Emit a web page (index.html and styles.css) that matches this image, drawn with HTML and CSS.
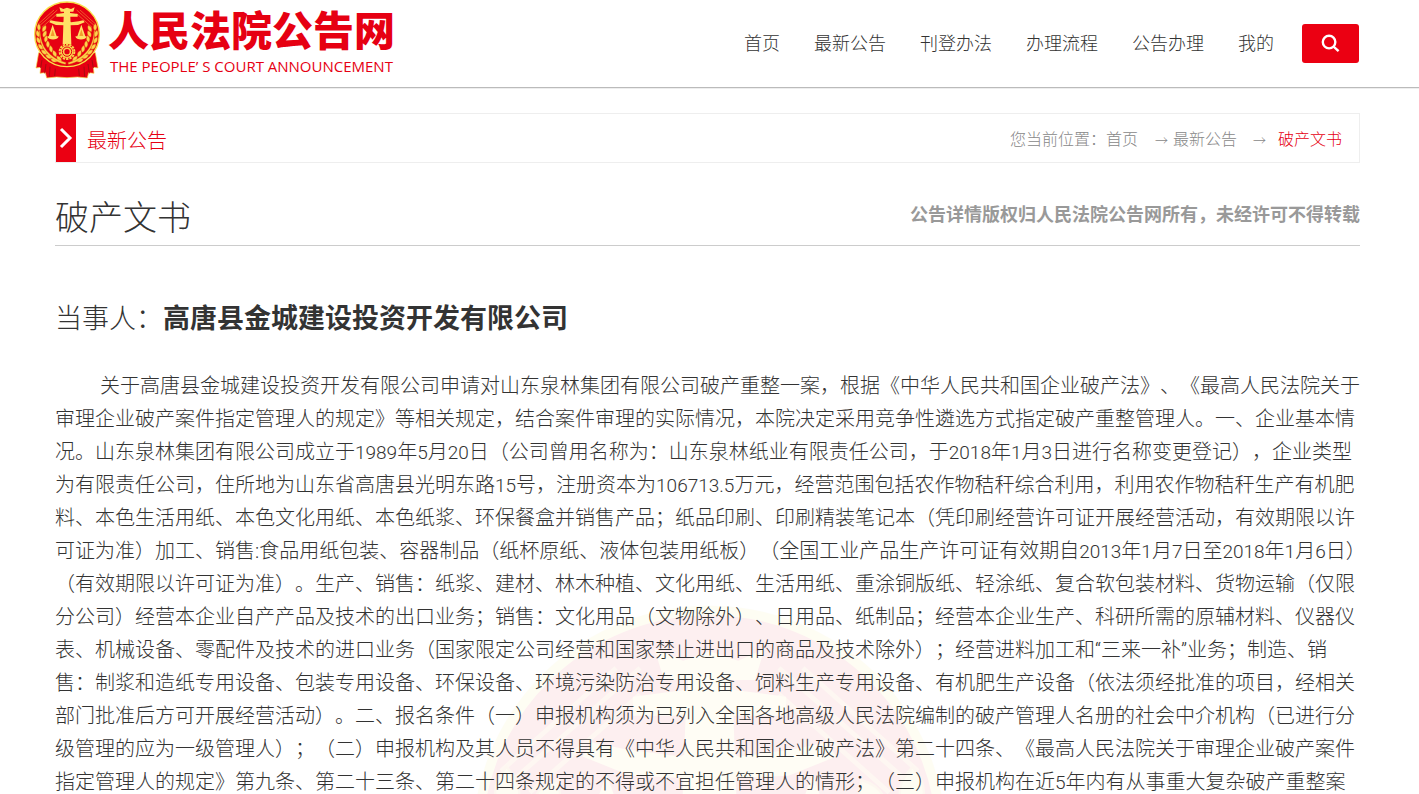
FILE: index.html
```html
<!DOCTYPE html>
<html lang="zh-CN">
<head>
<meta charset="utf-8">
<title>人民法院公告网</title>
<link rel="stylesheet" href="styles.css">
</head>
<body>
<svg class="defs" aria-hidden="true">
  <defs>
    <g id="leaf"><path d="M0 0C-8-4-10-12-5-20C3-15 5-7 0 0Z"/></g>
    <g id="branch">
      <use href="#leaf" transform="translate(57 92) rotate(12)"/>
      <use href="#leaf" transform="translate(68 95) rotate(42)"/>
      <use href="#leaf" transform="translate(56 111) rotate(0)"/>
      <use href="#leaf" transform="translate(70 111) rotate(38)"/>
      <use href="#leaf" transform="translate(60 130) rotate(-12)"/>
      <use href="#leaf" transform="translate(76 127) rotate(24)"/>
      <use href="#leaf" transform="translate(68 148) rotate(-24)"/>
      <use href="#leaf" transform="translate(84 143) rotate(12)"/>
      <use href="#leaf" transform="translate(80 163) rotate(-36)"/>
      <use href="#leaf" transform="translate(95 157) rotate(2)"/>
      <use href="#leaf" transform="translate(95 175) rotate(-48)"/>
      <use href="#leaf" transform="translate(108 170) rotate(-10)"/>
      <use href="#leaf" transform="translate(112 184) rotate(-58)"/>
      <use href="#leaf" transform="translate(124 183) rotate(-28)"/>
      <path d="M60 92C61 140 88 174 138 188L136 193C86 180 57 144 58 92Z"/>
    </g>
    <symbol id="emblem" viewBox="36 0 210 240">
      <path d="M56 158L48 204L62 202L60 220L76 218L80 234L110 231L141 233L172 231L202 234L206 218L222 220L220 202L234 204L226 158Z" fill="#e60012" stroke="#f7d94c" stroke-width="2"/>
      <path d="M66 180L62 204M78 192L74 220M90 200L88 230M106 206L104 228M216 180L220 204M204 192L208 220M192 200L194 230M176 206L178 228" fill="none" stroke="#a80c10" stroke-width="3"/>
      <circle cx="141" cy="103" r="97" fill="#e60012" stroke="#f9e04b" stroke-width="4"/>
      <g fill="none" stroke="#f08a35" stroke-width="2">
        <path d="M60 76L112 30M66 82L112 41M54 73L102 30M222 76L170 30M216 82L170 41M228 73L180 30"/>
      </g>
      <g fill="#fbd34c" stroke="#e08a1c" stroke-width="1">
        <use href="#branch"/>
        <use href="#branch" transform="matrix(-1 0 0 1 282 0)"/>
      </g>
      <g fill="#ffe066">
        <path d="M118 22L130 27L141 23L153 27L164 22L160 35H150V39L173 42V50H151L154 132H128L131 50H109V42L132 39V35H122Z"/>
        <path d="M141 60L153 67L176 64L190 61L194 67L174 75L151 76L141 73L131 76L108 75L88 67L92 61L106 64L129 67Z"/>
        <path d="M98 74L110 109H116C114 122 84 122 82 109H86ZM184 74L196 109H200C198 122 168 122 166 109H172Z"/>
      </g>
      <path d="M98 88L92 108H104ZM184 88L178 108H190Z" fill="#f39a2d"/>
      <circle cx="141" cy="155" r="22" fill="#e60012" stroke="#f9d54a" stroke-width="6" stroke-dasharray="7 3"/>
      <circle cx="141" cy="155" r="19" fill="#fbd34c"/>
      <circle cx="141" cy="155" r="14" fill="none" stroke="#e60012" stroke-width="3"/>
      <circle cx="141" cy="155" r="8" fill="#e60012"/>
    </symbol>
  </defs>
</svg>

<header class="header">
  <a class="brand" href="#">
    <svg class="brand-emblem" aria-hidden="true"><use href="#emblem"/></svg>
    <span class="brand-text">
      <span class="brand-name">人民法院公告网</span>
      <span class="brand-sub">THE PEOPLE’ S COURT ANNOUNCEMENT</span>
    </span>
  </a>
  <nav class="nav">
    <a href="#">首页</a>
    <a href="#">最新公告</a>
    <a href="#">刊登办法</a>
    <a href="#">办理流程</a>
    <a href="#">公告办理</a>
    <a href="#">我的</a>
  </nav>
  <button class="search" type="button" aria-label="搜索">
    <svg viewBox="0 0 20 20" aria-hidden="true"><circle cx="8.5" cy="8.5" r="6.6"/><path d="M13.2 13.2L18.5 18"/></svg>
  </button>
</header>

<main class="main">
  <svg class="watermark" aria-hidden="true"><use href="#emblem"/></svg>
  <div class="bar">
    <span class="bar-mark"><svg viewBox="0 0 14 22" aria-hidden="true"><path d="M2 2L11 11L2 20"/></svg></span>
    <h2 class="bar-title">最新公告</h2>
    <nav class="crumbs">
      <span>您当前位置：</span><a href="#">首页</a>
      <span class="arrow first">→</span><a href="#">最新公告</a>
      <span class="arrow second">→</span><a class="current" href="#">破产文书</a>
    </nav>
  </div>
  <div class="title-row">
    <h1 class="title">破产文书</h1>
    <strong class="notice">公告详情版权归人民法院公告网所有，未经许可不得转载</strong>
  </div>
  <article class="article">
    <h3 class="party">当事人：<strong>高唐县金城建设投资开发有限公司</strong></h3>
    <p class="content">关于高唐县金城建设投资开发有限公司申请对山东泉林集团有限公司破产重整一案，根据《中华人民共和国企业破产法》、《最高人民法院关于审理企业破产案件指定管理人的规定》等相关规定，结合案件审理的实际情况，本院决定采用竞争性遴选方式指定破产重整管理人。一、企业基本情况。山东泉林集团有限公司成立于<span class="num">1989</span>年<span class="num">5</span>月<span class="num">20</span>日（公司曾用名称为：山东泉林纸业有限责任公司，于<span class="num">2018</span>年<span class="num">1</span>月<span class="num">3</span>日进行名称变更登记），企业类型为有限责任公司，住所地为山东省高唐县光明东路<span class="num">15</span>号，注册资本为<span class="num">106713.5</span>万元，经营范围包括农作物秸秆综合利用，利用农作物秸秆生产有机肥料、本色生活用纸、本色文化用纸、本色纸浆、环保餐盒并销售产品；纸品印刷、印刷精装笔记本（凭印刷经营许可证开展经营活动，有效期限以许可证为准）加工、销售:食品用纸包装、容器制品（纸杯原纸、液体包装用纸板）（全国工业产品生产许可证有效期自<span class="num">2013</span>年<span class="num">1</span>月<span class="num">7</span>日至<span class="num">2018</span>年<span class="num">1</span>月<span class="num">6</span>日）（有效期限以许可证为准）。生产、销售：纸浆、建材、林木种植、文化用纸、生活用纸、重涂铜版纸、轻涂纸、复合软包装材料、货物运输（仅限分公司）经营本企业自产产品及技术的出口业务；销售：文化用品（文物除外）、日用品、纸制品；经营本企业生产、科研所需的原辅材料、仪器仪表、机械设备、零配件及技术的进口业务（国家限定公司经营和国家禁止进出口的商品及技术除外）；经营进料加工和“三来一补”业务；制造、销<br>售：制浆和造纸专用设备、包装专用设备、环保设备、环境污染防治专用设备、饲料生产专用设备、有机肥生产设备（依法须经批准的项目，经相关部门批准后方可开展经营活动）。二、报名条件（一）申报机构须为已列入全国各地高级人民法院编制的破产管理人名册的社会中介机构（已进行分级管理的应为一级管理人）；（二）申报机构及其人员不得具有《中华人民共和国企业破产法》第二十四条、《最高人民法院关于审理企业破产案件指定管理人的规定》第九条、第二十三条、第二十四条规定的不得或不宜担任管理人的情形；（三）申报机构在近<span class="num">5</span>年内有从事重大复杂破产重整案</p>
  </article>
</main>
</body>
</html>
```

FILE: styles.css
```css
* {
  box-sizing: border-box;
}

html {
  scrollbar-width: none;
}

body {
  margin: 0;
  background: #fff;
  color: #333;
  font-family: Roboto, "Noto Sans CJK SC", sans-serif;
  font-weight: 300;
  text-spacing-trim: space-all;
}

a {
  color: inherit;
  text-decoration: none;
}

h1,
h2,
h3,
p {
  margin: 0;
  font-weight: 300;
}

.defs {
  position: absolute;
  width: 0;
  height: 0;
}

/* Header */
.header {
  display: flex;
  align-items: center;
  height: 89px;
  padding: 0 60px 2px 32px;
  border-bottom: 1px solid #eee;
  box-shadow: inset 0 -1px #bbb;
}

.brand {
  display: flex;
  align-self: flex-start;
  gap: 6px;
  color: #e60012;
}

.brand-emblem {
  width: 70px;
  height: 80px;
}

.brand-text {
  display: flex;
  flex-direction: column;
  padding-top: 9px;
}

.brand-name {
  font-size: 41px;
  font-weight: 900;
  line-height: 46px;
}

.brand-sub {
  padding-left: 2px;
  font-family: "Open Sans", sans-serif;
  font-size: 15px;
  font-weight: 500;
  line-height: 22px;
  white-space: nowrap;
}

.nav {
  display: flex;
  gap: 34px;
  margin-left: auto;
  padding-top: 2px;
  font-size: 18px;
  line-height: 28px;
  white-space: nowrap;
}

.search {
  display: flex;
  align-items: center;
  justify-content: center;
  width: 57px;
  height: 39px;
  margin-left: 28px;
  padding: 0;
  border: 0;
  border-radius: 3px;
  background: #eb0012;
}

.search svg {
  width: 19px;
  height: 19px;
  fill: none;
  stroke: #fff;
  stroke-width: 2.5;
}

/* Page body */
.main {
  position: relative;
  overflow: hidden;
  padding: 24px 59px 0 55px;
}

.watermark {
  position: absolute;
  z-index: -1;
  top: 507px;
  left: 50%;
  width: 503px;
  height: 575px;
  margin-left: -252px;
  opacity: 0.06;
}

.bar {
  display: flex;
  align-items: center;
  height: 50px;
  padding-right: 17px;
  border: 1px solid #eee;
}

.bar-mark {
  display: flex;
  align-self: stretch;
  align-items: center;
  justify-content: center;
  width: 20px;
  background: #eb0012;
}

.bar-mark svg {
  width: 14px;
  height: 22px;
  fill: none;
  stroke: #fff;
  stroke-width: 3;
}

.bar-title {
  margin-left: 11px;
  padding-top: 6px;
  color: #e60012;
  font-size: 20px;
  line-height: 30px;
}

.crumbs {
  display: flex;
  margin-left: auto;
  padding-top: 4px;
  color: #888;
  font-size: 16px;
  line-height: 24px;
}

.arrow {
  font-family: "Noto Sans CJK SC", sans-serif;
  font-size: 13px;
}

.first {
  margin: 0 5px 0 17px;
}

.second {
  margin: 0 12px 0 16px;
}

.current {
  color: #e60012;
}

.title-row {
  display: flex;
  justify-content: space-between;
  padding: 30px 0 2px;
  border-bottom: 1px solid #ccc;
}

.title {
  font-size: 34px;
  line-height: 50px;
}

.notice {
  padding-top: 8px;
  color: #999;
  font-size: 18px;
  font-weight: 700;
  line-height: 28px;
}

.party {
  padding-top: 53px;
  font-size: 27px;
  line-height: 40px;
}

.party strong {
  font-weight: 700;
}

.content {
  margin-right: -10px;
  padding-top: 31px;
  font-size: 20px;
  line-height: 33px;
  text-indent: 45px;
}

.num {
  font-size: 19px;
}
```
